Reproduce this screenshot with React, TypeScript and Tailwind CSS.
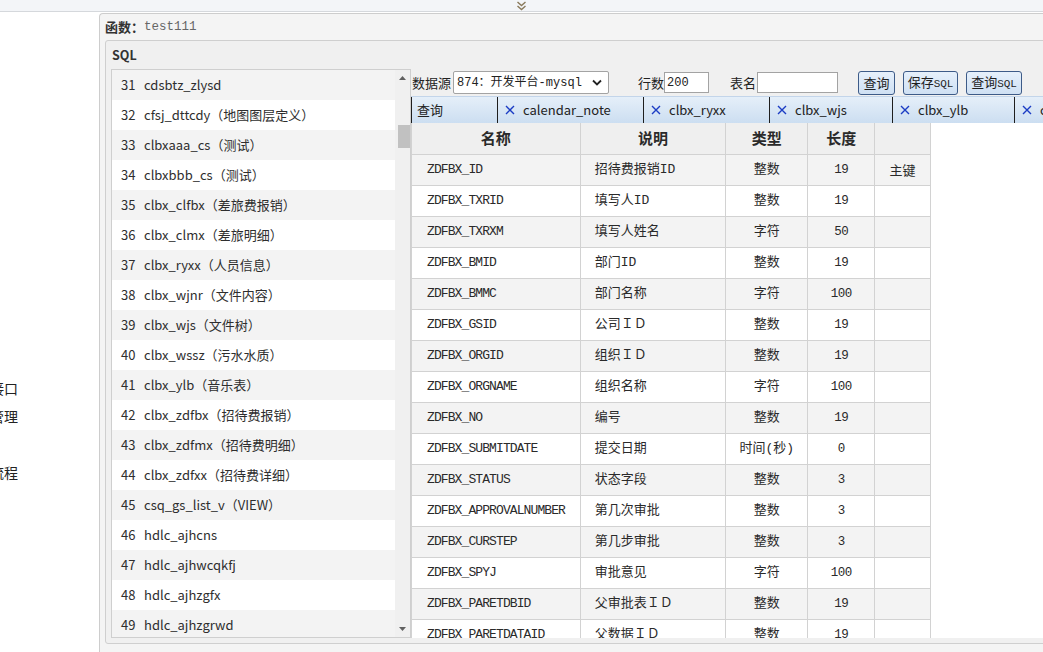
import React from 'react';

const listRows: [number, string][] = [
  [31, 'cdsbtz_zlysd'],
  [32, 'cfsj_dttcdy（地图图层定义）'],
  [33, 'clbxaaa_cs（测试）'],
  [34, 'clbxbbb_cs（测试）'],
  [35, 'clbx_clfbx（差旅费报销）'],
  [36, 'clbx_clmx（差旅明细）'],
  [37, 'clbx_ryxx（人员信息）'],
  [38, 'clbx_wjnr（文件内容）'],
  [39, 'clbx_wjs（文件树）'],
  [40, 'clbx_wssz（污水水质）'],
  [41, 'clbx_ylb（音乐表）'],
  [42, 'clbx_zdfbx（招待费报销）'],
  [43, 'clbx_zdfmx（招待费明细）'],
  [44, 'clbx_zdfxx（招待费详细）'],
  [45, 'csq_gs_list_v（VIEW）'],
  [46, 'hdlc_ajhcns'],
  [47, 'hdlc_ajhwcqkfj'],
  [48, 'hdlc_ajhzgfx'],
  [49, 'hdlc_ajhzgrwd'],
];

type Field = { name: string; desc: string; type: string; len: string; key?: string };

const fields: Field[] = [
  { name: 'ZDFBX_ID', desc: '招待费报销ID', type: '整数', len: '19', key: '主键' },
  { name: 'ZDFBX_TXRID', desc: '填写人ID', type: '整数', len: '19' },
  { name: 'ZDFBX_TXRXM', desc: '填写人姓名', type: '字符', len: '50' },
  { name: 'ZDFBX_BMID', desc: '部门ID', type: '整数', len: '19' },
  { name: 'ZDFBX_BMMC', desc: '部门名称', type: '字符', len: '100' },
  { name: 'ZDFBX_GSID', desc: '公司ＩＤ', type: '整数', len: '19' },
  { name: 'ZDFBX_ORGID', desc: '组织ＩＤ', type: '整数', len: '19' },
  { name: 'ZDFBX_ORGNAME', desc: '组织名称', type: '字符', len: '100' },
  { name: 'ZDFBX_NO', desc: '编号', type: '整数', len: '19' },
  { name: 'ZDFBX_SUBMITDATE', desc: '提交日期', type: '时间(秒)', len: '0' },
  { name: 'ZDFBX_STATUS', desc: '状态字段', type: '整数', len: '3' },
  { name: 'ZDFBX_APPROVALNUMBER', desc: '第几次审批', type: '整数', len: '3' },
  { name: 'ZDFBX_CURSTEP', desc: '第几步审批', type: '整数', len: '3' },
  { name: 'ZDFBX_SPYJ', desc: '审批意见', type: '字符', len: '100' },
  { name: 'ZDFBX_PARETDBID', desc: '父审批表ＩＤ', type: '整数', len: '19' },
  { name: 'ZDFBX_PARETDATAID', desc: '父数据ＩＤ', type: '整数', len: '19' },
];

const tabs = [
  { label: '查询', w: 'w-[87px] border-l pl-[5px]', close: false },
  { label: 'calendar_note', w: 'w-[146px] pl-[7px]', close: true },
  { label: 'clbx_ryxx', w: 'w-[126px] pl-[7px]', close: true },
  { label: 'clbx_wjs', w: 'w-[123px] pl-[7px]', close: true },
  { label: 'clbx_ylb', w: 'w-[122px] pl-[7px]', close: true },
  { label: 'clbx_zdfbx', w: 'w-[140px] pl-[7px]', close: true },
];

const mono = "font-['Liberation_Mono','Noto_Sans_CJK_SC',monospace]";

const Arrow = ({ down }: { down?: boolean }) => (
  <svg width="7" height="4" viewBox="0 0 7 4">
    <polygon points={down ? '0,0 7,0 3.5,4' : '0,4 3.5,0 7,4'} fill="#606060" />
  </svg>
);

const CloseX = () => (
  <svg width="10" height="10" viewBox="0 0 10 10" className="shrink-0">
    <path d="M1 1 L9 9 M9 1 L1 9" stroke="#1b3cc4" strokeWidth="1.4" />
  </svg>
);

const Btn = ({ children, w }: { children: React.ReactNode; w: string }) => (
  <button
    className={`${w} h-[24px] shrink-0 flex items-center justify-center rounded-[3px] border border-[#3d5b88] bg-linear-to-b from-[#e6f0fb] to-[#cfe0f3] text-[13px] text-[#1f1f1f]`}
  >
    <span className="leading-[20px]">{children}</span>
  </button>
);

function FieldTable() {
  return (
    <div className="w-[520px] text-[#2a2a2a]">
      <div className="flex h-[32px] border-b border-[#d2d2d2] bg-[#efefef] text-[15px] font-bold border-l">
        <div className="w-[169px] border-r border-[#d2d2d2] flex items-center justify-center">名称</div>
        <div className="w-[146px] border-r border-[#d2d2d2] flex items-center justify-center">说明</div>
        <div className="w-[82px] border-r border-[#d2d2d2] flex items-center justify-center">类型</div>
        <div className="w-[67px] border-r border-[#d2d2d2] flex items-center justify-center">长度</div>
        <div className="w-[56px] border-r border-[#d2d2d2]"></div>
      </div>
      {fields.map((f, i) => (
        <div
          key={f.name}
          className={`flex h-[31px] shrink-0 border-b border-l border-[#d2d2d2] ${i % 2 === 0 ? 'bg-[#f3f3f3]' : 'bg-white'}`}
        >
          <div className={`w-[169px] border-r border-[#d2d2d2] flex items-center pl-[15px] text-[13px] tracking-[-0.9px] ${mono}`}>{f.name}</div>
          <div className={`w-[146px] border-r border-[#d2d2d2] flex items-center pl-[14px] text-[13px] ${mono}`}>{f.desc}</div>
          <div className={`w-[82px] border-r border-[#d2d2d2] flex items-center justify-center text-[13px] ${mono}`}>{f.type}</div>
          <div className={`w-[67px] border-r border-[#d2d2d2] flex items-center justify-center text-[12.5px] tracking-[-0.5px] ${mono}`}>{f.len}</div>
          <div className="w-[56px] border-r border-[#d2d2d2] flex items-center justify-center text-[13px]">{f.key ?? ''}</div>
        </div>
      ))}
    </div>
  );
}

export default function App() {
  return (
    <div className="w-[1043px] h-[652px] overflow-hidden bg-white flex flex-col font-['Noto_Sans_CJK_SC',sans-serif] text-[#2b2b2b]">
      {/* top strip */}
      <div className="h-[12px] shrink-0 bg-[#f3f5f8] border-b border-[#d5d8dc] flex justify-center">
        <svg width="11" height="10" viewBox="0 0 11 10" className="mt-[1px]">
          <path d="M1.5 1 L5.5 4.5 L9.5 1 M1.5 5 L5.5 8.5 L9.5 5" stroke="#8a7a5c" strokeWidth="1.4" fill="none" />
        </svg>
      </div>

      <div className="flex flex-1 min-h-0">
        {/* left nav, mostly hidden behind the panel */}
        <aside className="w-[99px] shrink-0 pt-[362px] text-[14px] text-[#222]">
          <div className="w-[18px] h-[28px] overflow-hidden flex items-center justify-end whitespace-nowrap">数据接口</div>
          <div className="w-[18px] h-[28px] overflow-hidden flex items-center justify-end whitespace-nowrap">权限管理</div>
          <div className="h-[28px]"></div>
          <div className="w-[18px] h-[28px] overflow-hidden flex items-center justify-end whitespace-nowrap">审批流程</div>
        </aside>

        <main className="flex-1 min-w-0 mt-[1px] border-l border-t border-[#cdcdcd] rounded-tl-[4px] bg-[#f4f4f4] pl-[5px] flex flex-col">
          <div className="h-[26px] shrink-0 flex items-center whitespace-nowrap">
            <span className="text-[13px] font-bold text-[#333]">函数：</span>
            <span className={`text-[12.5px] text-[#666] ${mono}`}>test111</span>
          </div>

          <section className="w-[1000px] shrink-0 border border-[#cfcfcf] rounded-[3px] bg-[#f0f0f0] pb-[5px]">
            <div className="h-[28px] flex items-center pl-[6px] text-[12.5px] font-bold text-[#333]">SQL</div>

            <div className="flex h-[569px] pl-[5px]">
              {/* table list */}
              <div className="w-[300px] shrink-0 border border-[#cfcfcf] bg-white flex">
                <div className="w-[283px] overflow-hidden text-[13px] text-[#2e2e2e]">
                  {listRows.map(([n, name], i) => (
                    <div
                      key={n}
                      className={`h-[30px] flex items-center pl-[9px] whitespace-nowrap ${i % 2 === 0 ? 'bg-[#f3f3f3]' : 'bg-white'}`}
                    >
                      <span className="w-[23px] shrink-0">{n}</span>
                      <span>{name}</span>
                    </div>
                  ))}
                </div>
                <div className="w-[15px] bg-[#f0f0f0] flex flex-col items-center">
                  <div className="h-[16px] flex items-center justify-center"><Arrow /></div>
                  <div className="h-[39px]"></div>
                  <div className="h-[23px] w-[12px] ml-[2px] bg-[#c1c1c1]"></div>
                  <div className="flex-1"></div>
                  <div className="h-[16px] flex items-center justify-center"><Arrow down /></div>
                </div>
              </div>

              {/* right workspace */}
              <div className="flex-1 min-w-0 flex flex-col">
                <div className="h-[27px] shrink-0 flex items-center pl-[1px] text-[13px] text-[#222] whitespace-nowrap">
                  <span>数据源</span>
                  <div className={`ml-[2px] w-[156px] h-[23px] shrink-0 border border-[#a3a3a3] rounded-[2px] bg-white flex items-center justify-between pl-[3px] pr-[6px] text-[12px] ${mono}`}>
                    <span>874：开发平台-mysql</span>
                    <svg width="10" height="7" viewBox="0 0 10 7">
                      <path d="M1 1.5 L5 5.5 L9 1.5" stroke="#222" strokeWidth="1.8" fill="none" />
                    </svg>
                  </div>
                  <span className="ml-[29px]">行数</span>
                  <div className={`w-[45px] h-[21px] shrink-0 border border-[#a3a3a3] bg-white flex items-center pl-[2px] text-[12px] ${mono}`}>200</div>
                  <span className="ml-[21px]">表名</span>
                  <div className="ml-[1px] w-[81px] h-[21px] shrink-0 border border-[#a3a3a3] bg-white"></div>
                  <div className="ml-[20px] flex gap-[8px]">
                    <Btn w="w-[37px]">查询</Btn>
                    <Btn w="w-[55px]">
                      保存<span className={`text-[11px] ${mono}`}>SQL</span>
                    </Btn>
                    <Btn w="w-[56px]">
                      查询<span className={`text-[11px] ${mono}`}>SQL</span>
                    </Btn>
                  </div>
                </div>

                <div className="h-[27px] shrink-0 flex border-t border-[#c3d5ea] bg-linear-to-b from-[#e5eff9] to-[#ccdef1] whitespace-nowrap">
                  {tabs.map((t) => (
                    <div key={t.label} className={`${t.w} shrink-0 border-r border-[#1e1e1e] flex items-center text-[13px] text-[#222]`}>
                      {t.close && <CloseX />}
                      <span className={t.close ? 'ml-[8px]' : ''}>{t.label}</span>
                    </div>
                  ))}
                </div>

                <div className="flex-1 min-h-0 overflow-hidden bg-white">
                  <FieldTable />
                </div>
              </div>
            </div>
          </section>
        </main>
      </div>
    </div>
  );
}
